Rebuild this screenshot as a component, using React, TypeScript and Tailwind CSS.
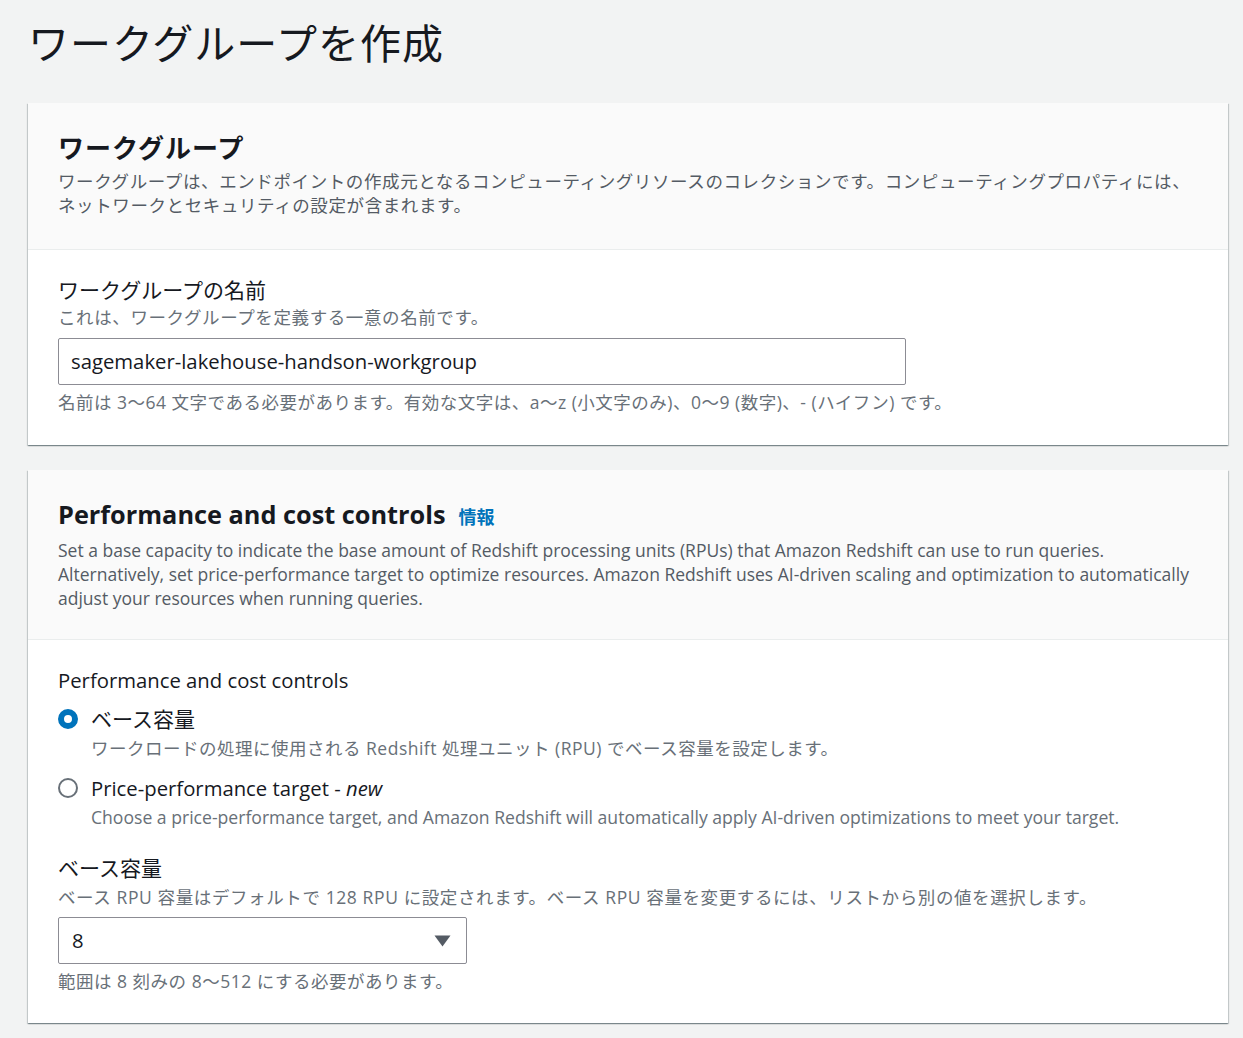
const font = "font-['Open_Sans','Noto_Sans_CJK_JP',sans-serif]"

function Radio({ checked }: { checked: boolean }) {
  return checked ? (
    <span className="mt-[4px] block h-[20px] w-[20px] shrink-0 rounded-full border-[6px] border-[#0073bb] bg-white" />
  ) : (
    <span className="mt-[4px] block h-[20px] w-[20px] shrink-0 rounded-full border-2 border-[#687078] bg-white" />
  )
}

function Card({ children }: { children: React.ReactNode }) {
  return (
    <section className="bg-white shadow-[0_1px_1px_0_rgba(0,28,36,0.3),1px_1px_1px_0_rgba(0,28,36,0.15),-1px_1px_1px_0_rgba(0,28,36,0.15)]">
      {children}
    </section>
  )
}

export default function App() {
  return (
    <div className={`min-h-[1038px] bg-[#f2f3f3] pl-[28px] pr-[15px] ${font} text-[#16191f]`}>
      <h1 className="pt-[18px] text-[41px] leading-[50px] font-normal tracking-[1px]">
        ワークグループを作成
      </h1>

      <div className="mt-[35px] flex flex-col gap-[25px]">
        <Card>
          <div className="border-b border-[#eaeded] bg-[#fafafa] px-[30px] pt-[28px] pb-[32px]">
            <h2 className="text-[26px] leading-[34px] font-bold tracking-[1px]">ワークグループ</h2>
            <p className="mt-[4px] text-[17.5px] leading-[24px] tracking-[0.6px] text-[#545b64]">
              ワークグループは、エンドポイントの作成元となるコンピューティングリソースのコレクションです。コンピューティングプロパティには、ネットワークとセキュリティの設定が含まれます。
            </p>
          </div>
          <div className="px-[30px] pt-[26px] pb-[30px]">
            <label className="block text-[21px] leading-[28px]">ワークグループの名前</label>
            <p className="text-[17.5px] leading-[26px] tracking-[0.6px] text-[#687078]">
              これは、ワークグループを定義する一意の名前です。
            </p>
            <div className="mt-[8px] flex h-[47px] w-[848px] items-center rounded-[2px] border border-[#8c8c94] px-[12px] text-[20.3px]">
              sagemaker-lakehouse-handson-workgroup
            </div>
            <p className="mt-[4px] text-[17.5px] leading-[26px] tracking-[0.5px] text-[#687078]">
              名前は 3～64 文字である必要があります。有効な文字は、a～z (小文字のみ)、0～9 (数字)、- (ハイフン) です。
            </p>
          </div>
        </Card>

        <Card>
          <div className="border-b border-[#eaeded] bg-[#fafafa] px-[30px] pt-[27px] pb-[29px]">
            <h2 className="flex items-baseline gap-[13px] text-[25.3px] leading-[34px] font-bold">
              Performance and cost controls
              <span className="text-[18px] font-bold text-[#0073bb]">情報</span>
            </h2>
            <p className="mt-[4px] text-[17.5px] leading-[24px] text-[#545b64]">
              Set a base capacity to indicate the base amount of Redshift processing units (RPUs) that Amazon Redshift can use to run queries. Alternatively, set price-performance target to optimize resources. Amazon Redshift uses AI-driven scaling and optimization to automatically adjust your resources when running queries.
            </p>
          </div>
          <div className="px-[30px] pt-[26px] pb-[29px]">
            <p className="text-[20.3px] leading-[28px]">Performance and cost controls</p>
            <div className="mt-[11px] flex gap-[13px]">
              <Radio checked />
              <div>
                <p className="text-[21px] leading-[28px]">ベース容量</p>
                <p className="text-[17.5px] leading-[30px] tracking-[0.5px] text-[#687078]">
                  ワークロードの処理に使用される Redshift 処理ユニット (RPU) でベース容量を設定します。
                </p>
              </div>
            </div>
            <div className="mt-[11px] flex gap-[13px]">
              <Radio checked={false} />
              <div>
                <p className="text-[20.3px] leading-[28px]">
                  Price-performance target - <i>new</i>
                </p>
                <p className="text-[17.6px] leading-[30px] text-[#687078]">
                  Choose a price-performance target, and Amazon Redshift will automatically apply AI-driven optimizations to meet your target.
                </p>
              </div>
            </div>
            <p className="mt-[22px] text-[21px] leading-[28px]">ベース容量</p>
            <p className="text-[17.5px] leading-[30px] tracking-[0.6px] text-[#687078]">
              ベース RPU 容量はデフォルトで 128 RPU に設定されます。ベース RPU 容量を変更するには、リストから別の値を選択します。
            </p>
            <div className="mt-[5px] flex h-[47px] w-[409px] items-center justify-between rounded-[2px] border border-[#8c8c94] pl-[13px] pr-[15px] text-[20.3px]">
              <span>8</span>
              <svg width="17" height="12" viewBox="0 0 17 12">
                <path d="M0.5 0.5 L16.5 0.5 L8.5 11.5 Z" fill="#545b64" />
              </svg>
            </div>
            <p className="mt-[4px] text-[17.5px] leading-[26px] tracking-[0.5px] text-[#687078]">
              範囲は 8 刻みの 8～512 にする必要があります。
            </p>
          </div>
        </Card>
      </div>
    </div>
  )
}
